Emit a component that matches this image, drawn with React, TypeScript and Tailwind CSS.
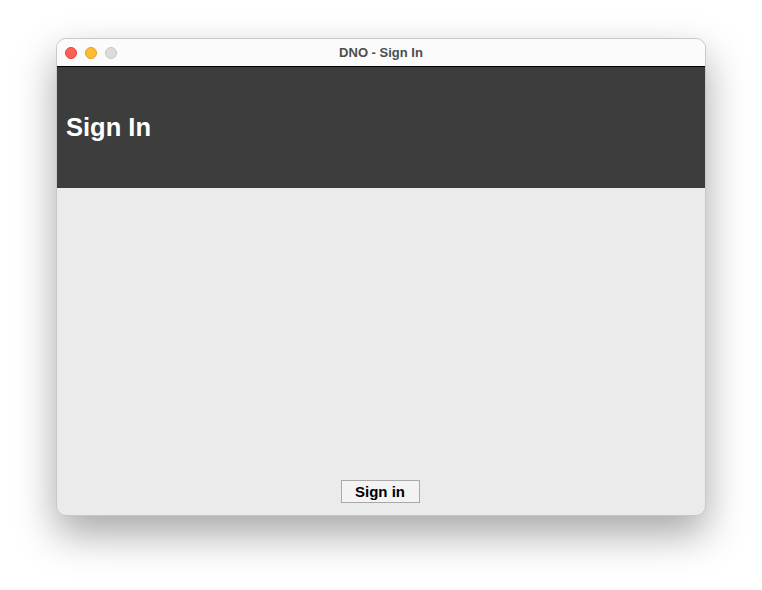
export default function App() {
  return (
    <div className="w-[762px] h-[590px] bg-white pt-[38px] pl-[56px]" style={{ fontFamily: '"Liberation Sans", Arial, sans-serif' }}>
      <div className="w-[650px] h-[478px] rounded-[10px] overflow-hidden flex flex-col bg-[#ebebeb] border border-[#c8c8c8] shadow-[0_18px_40px_rgba(0,0,0,0.35)]">
        {/* title bar */}
        <div className="relative h-[28px] bg-[#fbfbfb] border-b border-black flex items-center justify-center shrink-0">
          <div className="absolute left-[8px] top-[8px] flex gap-[8px]">
            <span className="w-[12px] h-[12px] rounded-full bg-[#fe5f57] border border-[#e0443e]" />
            <span className="w-[12px] h-[12px] rounded-full bg-[#febc2e] border border-[#dea123]" />
            <span className="w-[12px] h-[12px] rounded-full bg-[#dcdcdc] border border-[#c6c6c6]" />
          </div>
          <span className="text-[13px] font-bold text-[#4d4d4d]">DNO - Sign In</span>
        </div>
        {/* header */}
        <div className="h-[121px] bg-[#3d3d3d] flex items-center pl-[9px] shrink-0">
          <h1 className="text-[25.5px] font-bold text-white">Sign In</h1>
        </div>
        {/* body */}
        <div className="flex-1 flex flex-col justify-end items-center pb-[12px] pr-[2px]">
          <button className="w-[79px] h-[23px] bg-[#f3f3f3] border border-[#a9a9a9] text-[15px] font-bold text-black leading-none">
            Sign in
          </button>
        </div>
      </div>
    </div>
  );
}
